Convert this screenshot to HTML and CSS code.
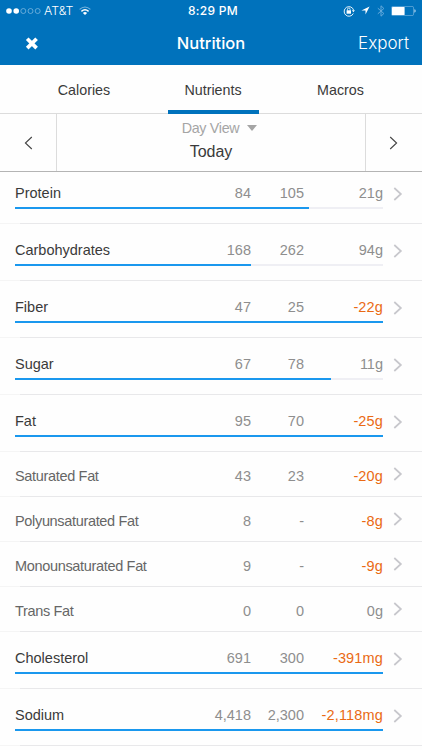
FILE: index.html
```html
<!DOCTYPE html>
<html lang="en">

<head>
    <meta charset="UTF-8">
    <meta name="viewport" content="width=device-width, initial-scale=1.0">
    <title>Nutrition</title>
    <link rel="stylesheet" href="styles.css">
</head>

<body>
    <header class="header">
        <div class="status">
            <div class="status-left">
                <svg class="signal" width="35" height="8" viewBox="0 0 35 8">
                    <circle cx="3" cy="4" r="2.8" fill="#fff" />
                    <circle cx="10.2" cy="4" r="2.8" fill="#fff" />
                    <g fill="none" stroke="#8cc0e4" stroke-width=".7">
                        <circle cx="17.3" cy="4" r="2.5" />
                        <circle cx="24.5" cy="4" r="2.5" />
                        <circle cx="31.7" cy="4" r="2.5" />
                    </g>
                </svg>
                <span class="carrier">AT&amp;T</span>
                <svg class="wifi" width="12" height="10" viewBox="0 0 12 10">
                    <path d="M.6 3.4Q6-1.3 11.4 3.4" fill="none" stroke="#7db7df" stroke-width="1.1" />
                    <path d="M2.4 5.4Q6 2.3 9.6 5.4" fill="none" stroke="#fff" stroke-width="1.4" />
                    <path d="M3.9 6.9Q6 5.2 8.1 6.9L6 9.1z" fill="#fff" />
                </svg>
            </div>
            <span class="clock">8:29 PM</span>
            <div class="status-right">
                <svg width="12" height="12" viewBox="0 0 12 12">
                    <path d="M10.3 8.5A4.8 4.8 0 1 1 10.6 5.2" fill="none" stroke="#fff" stroke-width=".9" />
                    <path d="M8.9 5.3h3l-1.5 2z" fill="#fff" />
                    <rect x="3.6" y="5.3" width="4.4" height="3.4" fill="#fff" />
                    <path d="M4.5 5.5V4.3a1.3 1.3 0 0 1 2.6 0v1.2" fill="none" stroke="#fff" stroke-width=".8" />
                </svg>
                <svg class="location" width="9" height="9" viewBox="0 0 9 9">
                    <path d="M8.6.4L.4 4.4h4.1v4.1z" fill="#fff" />
                </svg>
                <svg class="bluetooth" width="8" height="12" viewBox="0 0 8 12">
                    <path d="M.8 3.2l6.1 5.3L4 11.2V.8l2.9 2.7L.8 8.8" fill="none" stroke="#65aadb" stroke-width="1" />
                </svg>
                <svg class="battery" width="25" height="10" viewBox="0 0 25 10">
                    <rect x=".4" y=".4" width="22.2" height="9.2" rx="1.5" fill="none" stroke="#69acdb" stroke-width=".8" />
                    <rect x="1" y="1" width="12.6" height="8" rx=".6" fill="#fff" />
                    <path d="M23.4 3.3q1.3.3 1.3 1.7t-1.3 1.7z" fill="#b5d8f0" />
                </svg>
            </div>
        </div>
        <div class="nav">
            <svg class="close" width="14" height="13" viewBox="0 0 14 13">
                <path d="M2.2 1.7l9.4 9.4M11.6 1.7l-9.4 9.4" stroke="#fff" stroke-width="3.7" />
            </svg>
            <h1 class="title">Nutrition</h1>
            <span class="export">Export</span>
        </div>
    </header>

    <nav class="tabs">
        <span class="tab">Calories</span>
        <span class="tab active">Nutrients</span>
        <span class="tab">Macros</span>
    </nav>

    <div class="date">
        <div class="prev">
            <svg width="9" height="14" viewBox="0 0 9 14">
                <path d="M7.8 1L1.4 7l6.4 6" fill="none" stroke="#444" stroke-width="1.1" />
            </svg>
        </div>
        <div class="day">
            <div class="view">Day View <i class="arrow"></i></div>
            <div class="today">Today</div>
        </div>
        <div class="next">
            <svg width="9" height="14" viewBox="0 0 9 14">
                <path d="M1.2 1l6.4 6-6.4 6" fill="none" stroke="#444" stroke-width="1.1" />
            </svg>
        </div>
    </div>

    <main class="content">
        <div class="list"></div>
    </main>

    <script>
        // name, total, goal, unit, sub row
        let rows = [
            ['Protein', 84, 105, 'g'],
            ['Carbohydrates', 168, 262, 'g'],
            ['Fiber', 47, 25, 'g'],
            ['Sugar', 67, 78, 'g'],
            ['Fat', 95, 70, 'g'],
            ['Saturated Fat', 43, 23, 'g', true],
            ['Polyunsaturated Fat', 8, 0, 'g', true],
            ['Monounsaturated Fat', 9, 0, 'g', true],
            ['Trans Fat', 0, 0, 'g', true],
            ['Cholesterol', 691, 300, 'mg'],
            ['Sodium', 4418, 2300, 'mg']
        ]
        let list = document.querySelector('.list')
        let html = ''
        for (let i = 0; i < rows.length; i++) {
            let [name, total, goal, unit, sub] = rows[i]
            let left = goal - total
            // no goal set: show a dash
            let goalText = goal === 0 && total > 0 ? '-' : goal.toLocaleString('en-US')
            html += `<div class="row ${sub ? 'sub' : ''}">
                <div class="line">
                    <span class="name">${name}</span>
                    <span class="num">${total.toLocaleString('en-US')}</span>
                    <span class="num">${goalText}</span>
                    <span class="num ${left < 0 ? 'over' : ''}">${left.toLocaleString('en-US')}${unit}</span>
                    <svg class="more" width="10" height="14" viewBox="0 0 10 14"><path d="M1.3 1l6.6 6-6.6 6" fill="none" stroke="#c7c7cc" stroke-width="1.7"/></svg>
                </div>`
            if (!sub) {
                html += `<div class="track"><div class="bar" style="width: ${Math.min(100, total / goal * 100)}%"></div></div>`
            }
            html += '</div>'
        }
        list.innerHTML = html
    </script>
</body>

</html>
```
FILE: styles.css
```css
* {
    padding: 0;
    margin: 0;
    box-sizing: border-box;
}

body {
    display: flex;
    flex-direction: column;
    height: 100vh;
    overflow: hidden;
    background-color: #fefefe;
    font-family: "Liberation Sans", Arial, sans-serif;
    color: #3a3a3a;
}

svg {
    display: block;
    flex: none;
}

/* header */
.header {
    height: 65px;
    flex: none;
    background-color: #0072bc;
    color: #fff;
    font-family: Inter, sans-serif;
}

.status {
    display: grid;
    grid-template-columns: 1fr auto 1fr;
    align-items: center;
    height: 21px;
    padding: 0 6px 0 10px;
}

.status-left,
.status-right {
    display: flex;
    align-items: center;
}

.status-left {
    margin-left: -4px;
}

.status-right {
    justify-content: flex-end;
}

.carrier {
    margin: 0 6px 0 3px;
    font-size: 12.3px;
    font-weight: 300;
}

.clock {
    font-size: 12px;
    font-weight: 500;
    letter-spacing: 0.3px;
}

.location {
    margin-left: 6px;
}

.bluetooth {
    margin: 0 6px 0 7px;
}

.nav {
    display: grid;
    grid-template-columns: 1fr auto 1fr;
    align-items: center;
    height: 44px;
    padding: 0 13px;
}

.close {
    margin-left: 12px;
}

.title {
    font-size: 16.5px;
    font-weight: 500;
    line-height: 44px;
}

.export {
    text-align: right;
    font-size: 17px;
    font-weight: 300;
}

/* tabs */
.tabs {
    display: flex;
    justify-content: center;
    gap: 38px;
    height: 49px;
    flex: none;
    padding-left: 4px;
    border-bottom: 1px solid #dcdcdc;
}

.tab {
    width: 91px;
    text-align: center;
    font-size: 14.3px;
    line-height: 50px;
}

.tab:last-child {
    padding-right: 3px;
}

.active {
    border-bottom: 4px solid #0072bc;
    height: 49px;
}

/* date */
.date {
    display: flex;
    height: 58px;
    flex: none;
    border-bottom: 1px solid #b4b4b4;
}

.prev,
.next {
    display: flex;
    align-items: center;
    justify-content: center;
    width: 57px;
}

.prev {
    border-right: 1px solid #dcdcdc;
}

.next {
    padding-right: 2px;
    border-left: 1px solid #dcdcdc;
}

.day {
    flex: 1;
    text-align: center;
}

.view {
    display: flex;
    align-items: center;
    justify-content: center;
    gap: 8px;
    padding: 4px 0 0 17px;
    font-size: 14.3px;
    line-height: 20px;
    letter-spacing: -0.3px;
    color: #a5a5a5;
}

.arrow {
    border: 5px solid transparent;
    border-top: 6px solid #a5a5a5;
    border-bottom: 0;
}

.today {
    padding-top: 2px;
    font-size: 16px;
    line-height: 24px;
}

/* list, scrolled a little under the date */
.content {
    flex: 1;
    overflow: hidden;
}

.list {
    margin-top: -5px;
}

.row {
    height: 57px;
    padding: 16px 0 0 15px;
    background: linear-gradient(to right, #f5f5f5 20px, #e8e8ea 20px) bottom / 100% 1px no-repeat;
}

.line {
    display: grid;
    grid-template-columns: 1fr 56px 53px 79px 39px;
    align-items: center;
    height: 20px;
    font-size: 14.5px;
    line-height: 20px;
}

.num {
    text-align: right;
    color: #8e8e8e;
}

.over {
    color: #ea6a14;
    letter-spacing: 0.15px;
}

.more {
    margin: 2px 0 0 10px;
}

.track {
    width: 368px;
    height: 2px;
    margin-top: 4px;
    background-color: #efeff4;
}

.bar {
    height: 2px;
    background-color: #1a98ee;
}

.sub {
    height: 45px;
    padding-top: 14px;
}

.sub .name {
    color: #666;
    letter-spacing: -0.33px;
}

.sub .more {
    margin-top: -5px;
}
```
